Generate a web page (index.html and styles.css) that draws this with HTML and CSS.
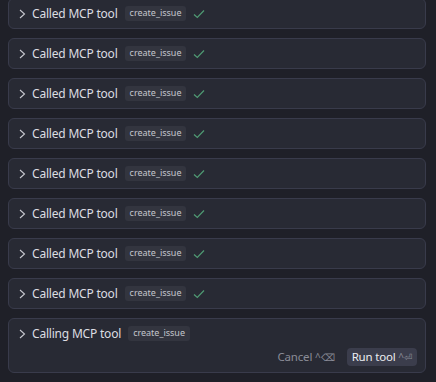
FILE: index.html
```html
<!DOCTYPE html>
<html lang="en">
<head>
  <meta charset="UTF-8" />
  <title>Tool calls</title>
  <link rel="stylesheet" href="styles.css">
</head>
<body>
  <div class="calls">
    <div class="call">
      <div class="call-head">
        <svg class="chev" viewBox="0 0 7 10" width="7" height="10"><path d="M1 1 L5.5 5 L1 9" /></svg>
        <span class="call-title">Called MCP tool</span>
        <span class="tool-name">create_issue</span>
        <svg class="check" viewBox="0 0 12 10" width="12" height="10"><path d="M1 5.5 L4.3 8.5 L11 1.5" /></svg>
      </div>
    </div>
    <div class="call">
      <div class="call-head">
        <svg class="chev" viewBox="0 0 7 10" width="7" height="10"><path d="M1 1 L5.5 5 L1 9" /></svg>
        <span class="call-title">Called MCP tool</span>
        <span class="tool-name">create_issue</span>
        <svg class="check" viewBox="0 0 12 10" width="12" height="10"><path d="M1 5.5 L4.3 8.5 L11 1.5" /></svg>
      </div>
    </div>
    <div class="call">
      <div class="call-head">
        <svg class="chev" viewBox="0 0 7 10" width="7" height="10"><path d="M1 1 L5.5 5 L1 9" /></svg>
        <span class="call-title">Called MCP tool</span>
        <span class="tool-name">create_issue</span>
        <svg class="check" viewBox="0 0 12 10" width="12" height="10"><path d="M1 5.5 L4.3 8.5 L11 1.5" /></svg>
      </div>
    </div>
    <div class="call">
      <div class="call-head">
        <svg class="chev" viewBox="0 0 7 10" width="7" height="10"><path d="M1 1 L5.5 5 L1 9" /></svg>
        <span class="call-title">Called MCP tool</span>
        <span class="tool-name">create_issue</span>
        <svg class="check" viewBox="0 0 12 10" width="12" height="10"><path d="M1 5.5 L4.3 8.5 L11 1.5" /></svg>
      </div>
    </div>
    <div class="call">
      <div class="call-head">
        <svg class="chev" viewBox="0 0 7 10" width="7" height="10"><path d="M1 1 L5.5 5 L1 9" /></svg>
        <span class="call-title">Called MCP tool</span>
        <span class="tool-name">create_issue</span>
        <svg class="check" viewBox="0 0 12 10" width="12" height="10"><path d="M1 5.5 L4.3 8.5 L11 1.5" /></svg>
      </div>
    </div>
    <div class="call">
      <div class="call-head">
        <svg class="chev" viewBox="0 0 7 10" width="7" height="10"><path d="M1 1 L5.5 5 L1 9" /></svg>
        <span class="call-title">Called MCP tool</span>
        <span class="tool-name">create_issue</span>
        <svg class="check" viewBox="0 0 12 10" width="12" height="10"><path d="M1 5.5 L4.3 8.5 L11 1.5" /></svg>
      </div>
    </div>
    <div class="call">
      <div class="call-head">
        <svg class="chev" viewBox="0 0 7 10" width="7" height="10"><path d="M1 1 L5.5 5 L1 9" /></svg>
        <span class="call-title">Called MCP tool</span>
        <span class="tool-name">create_issue</span>
        <svg class="check" viewBox="0 0 12 10" width="12" height="10"><path d="M1 5.5 L4.3 8.5 L11 1.5" /></svg>
      </div>
    </div>
    <div class="call">
      <div class="call-head">
        <svg class="chev" viewBox="0 0 7 10" width="7" height="10"><path d="M1 1 L5.5 5 L1 9" /></svg>
        <span class="call-title">Called MCP tool</span>
        <span class="tool-name">create_issue</span>
        <svg class="check" viewBox="0 0 12 10" width="12" height="10"><path d="M1 5.5 L4.3 8.5 L11 1.5" /></svg>
      </div>
    </div>
    <div class="call pending">
      <div class="call-head">
        <svg class="chev" viewBox="0 0 7 10" width="7" height="10"><path d="M1 1 L5.5 5 L1 9" /></svg>
        <span class="call-title">Calling MCP tool</span>
        <span class="tool-name">create_issue</span>
      </div>
      <div class="call-actions">
        <button class="btn-cancel">Cancel <span class="kbd">^⌫</span></button>
        <button class="btn-run">Run tool <span class="kbd">^⏎</span></button>
      </div>
    </div>
  </div>
</body>
</html>
```

FILE: styles.css
```css
body {
  margin: 0;
  background: #1f2028;
  font-family: "Noto Sans", "Open Sans", sans-serif;
  color: #d6d7dc;
  overflow: hidden;
}

.calls {
  display: flex;
  flex-direction: column;
  gap: 9px;
  padding: 0 10px 0 8px;
  margin-top: -2px;
}

.call {
  background: #282a34;
  border: 1px solid #393b4b;
  border-radius: 6px;
}

.call-head {
  display: flex;
  align-items: center;
  height: 29px;
  padding-left: 10px;
}

.chev {
  flex: none;
  margin-right: 6px;
}

.chev path {
  fill: none;
  stroke: #c8c9d0;
  stroke-width: 1.1;
}

.call-title {
  font-size: 12px;
  letter-spacing: -0.2px;
  color: #dcdde2;
  margin-right: 7px;
}

.tool-name {
  font-size: 9px;
  color: #c3c5cc;
  background: #33353f;
  border-radius: 3px;
  padding: 2px 5px 3px;
  line-height: 10px;
}

.check {
  margin-left: 7px;
}

.check path {
  fill: none;
  stroke: #4f9a73;
  stroke-width: 1.2;
}

.call-actions {
  display: flex;
  justify-content: flex-end;
  align-items: center;
  gap: 7px;
  padding: 0 8px 6px 0;
}

.btn-cancel,
.btn-run {
  font-family: inherit;
  font-size: 11.5px;
  letter-spacing: -0.2px;
  line-height: 17px;
  border: none;
  border-radius: 4px;
  padding: 0 5px;
  cursor: pointer;
}

.btn-cancel {
  background: none;
  color: #8a8c97;
}

.btn-run {
  background: #3b3d4c;
  color: #eceef2;
}

.kbd {
  font-size: 10px;
  letter-spacing: 0;
  color: #8a8c97;
}
```
